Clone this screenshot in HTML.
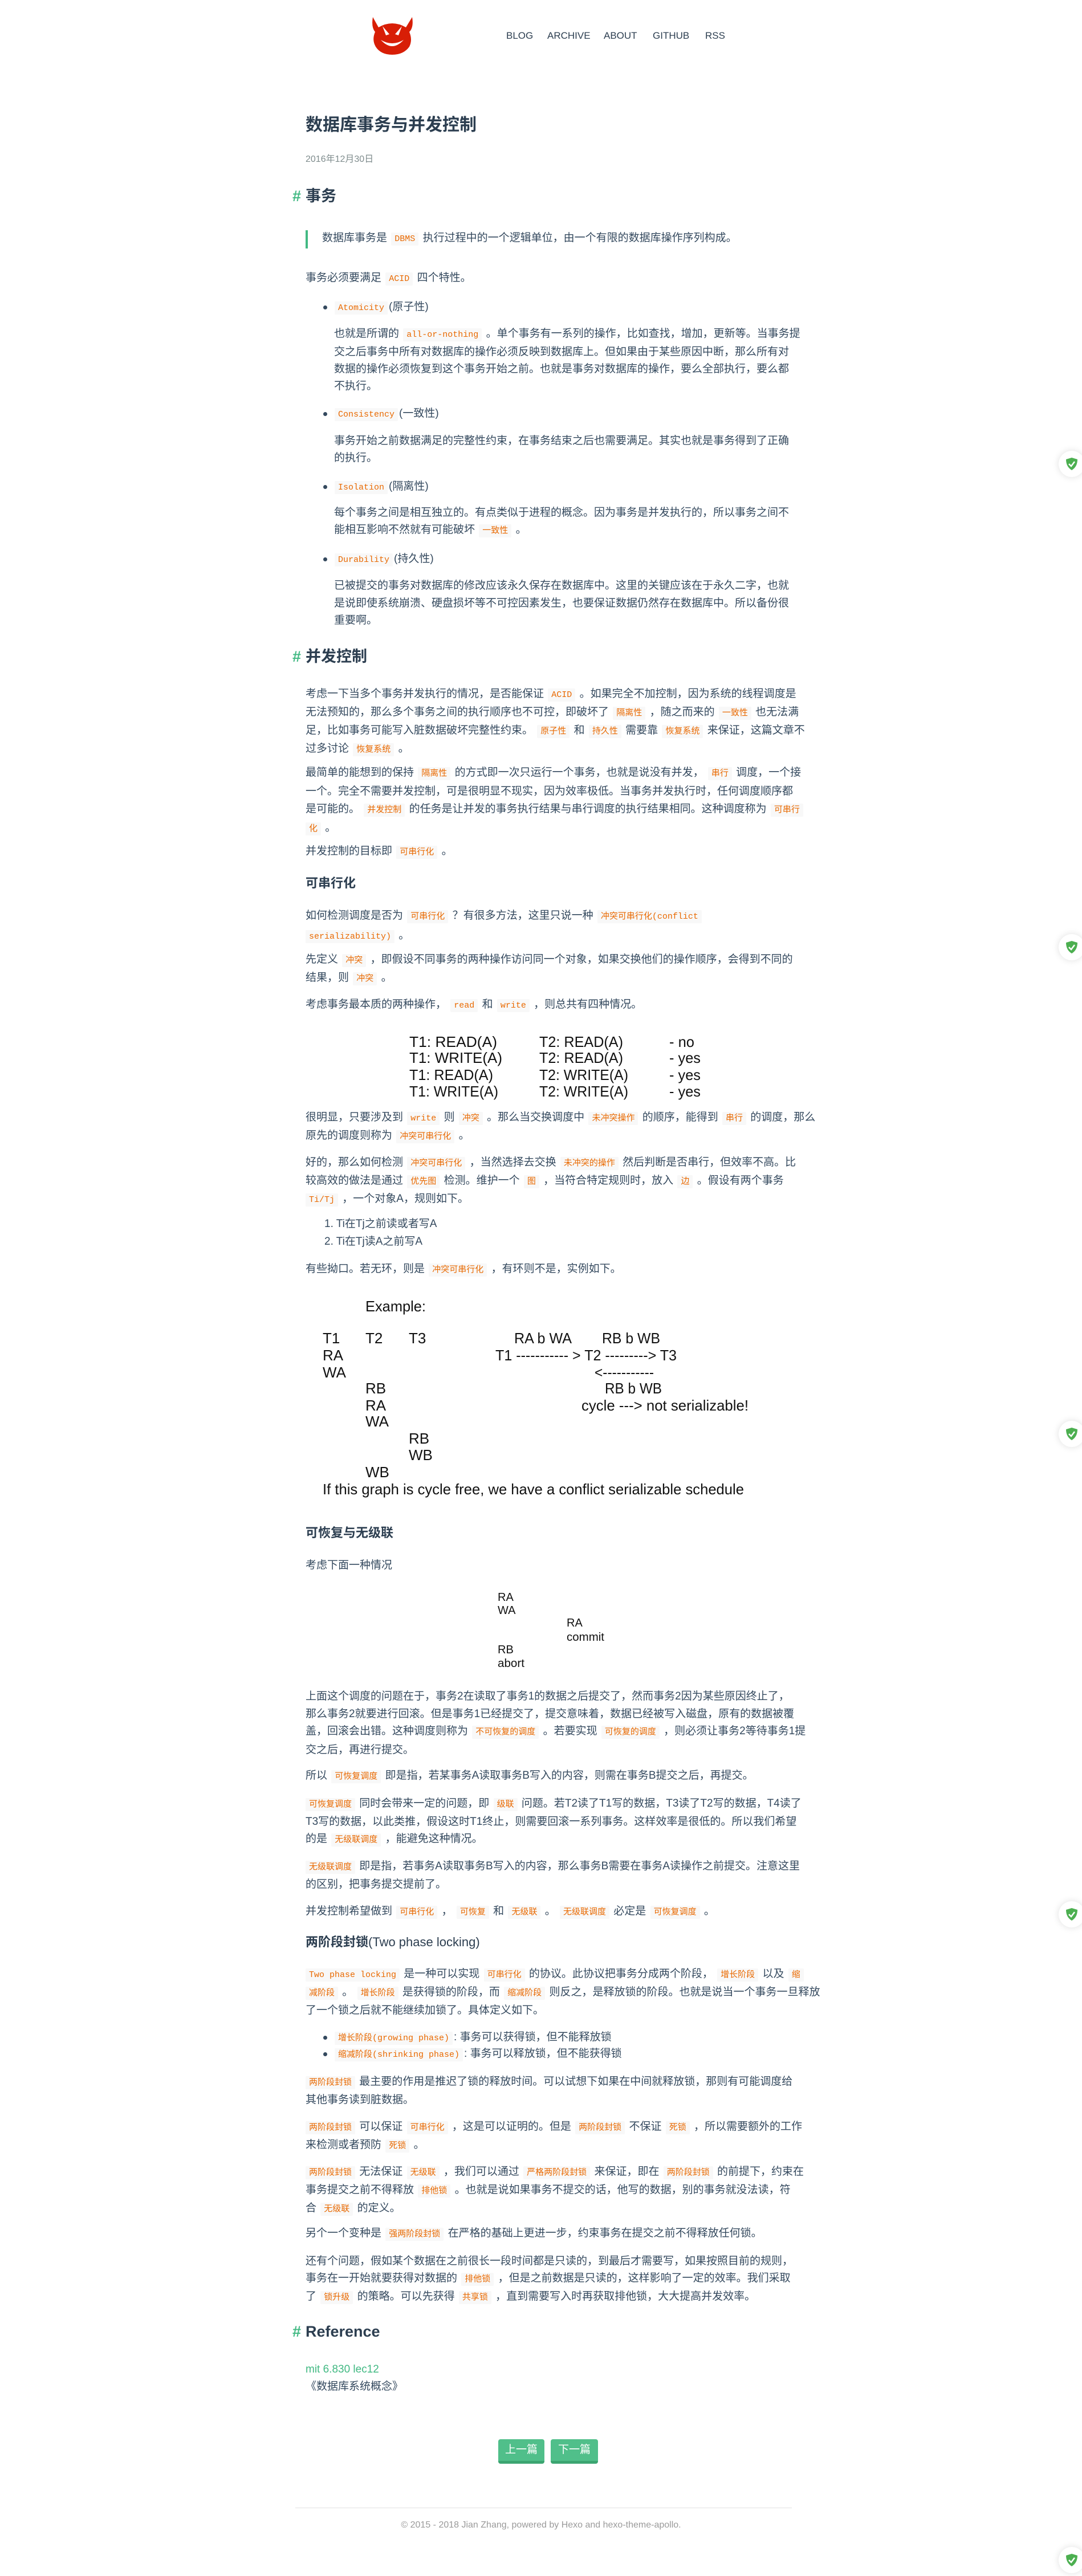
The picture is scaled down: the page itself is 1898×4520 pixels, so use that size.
<!DOCTYPE html>
<html><head><meta charset="utf-8">
<style>
*{margin:0;padding:0;box-sizing:border-box}
html,body{width:1898px;height:4520px;background:#fff;overflow:hidden}
body{position:relative;font-family:"Liberation Sans","Noto Sans CJK SC",sans-serif;color:#34495e}
.p{position:absolute;left:536px;font-size:19px;line-height:30px;white-space:nowrap;color:#34495e}
.in{left:586px}
code{font-family:"Liberation Mono","Noto Sans CJK SC",monospace;font-size:15px;color:#e96900;background:#f8f8f8;padding:3px 6px;border-radius:2px;margin:0 2px}
.h1{position:absolute;left:536px;font-size:27px;font-weight:bold;color:#2c3e50;line-height:40px;white-space:nowrap}
.h1 .hash{position:absolute;left:-23px;color:#42b983}
.h3{position:absolute;left:536px;font-size:22px;font-weight:bold;color:#2c3e50;line-height:32px;white-space:nowrap}
.dot{position:absolute;left:567px;width:7px;height:7px;border-radius:50%;background:#34495e}
.nav{position:absolute;top:53px;font-size:17px;color:#2c3e50;line-height:20px;letter-spacing:0}
.sh{position:absolute;left:1857px;width:46px;height:46px;border-radius:50%;background:#fff;box-shadow:0 0 12px rgba(0,0,0,.13)}
.sh svg{position:absolute;left:12px;top:11px}
.btn{position:absolute;top:4280px;height:43px;background:#50bf8a;border-bottom:5px solid #3ca571;border-radius:4px;color:#fff;font-size:19px;line-height:38px;text-align:center}
</style></head><body>

<svg style="position:absolute;left:652px;top:30px" width="72" height="66" viewBox="0 0 72 66">
<path d="M2 0 L12 18 Q36 4 60 18 L71 0 Q74 18 66 26 Q72 40 66 52 Q56 66 36 66 Q16 66 7 52 Q0 40 6 26 Q-1 18 2 0Z" fill="#d81e06"/>
<path d="M19 16 L31 30 L25 32Z M53 16 L41 30 L47 32Z" fill="#fff"/>
<path d="M16 40 Q36 62 56 40 Q36 52 16 40Z" fill="#fff"/>
</svg>
<div class="nav" style="left:888px">BLOG</div>
<div class="nav" style="left:960px">ARCHIVE</div>
<div class="nav" style="left:1059px">ABOUT</div>
<div class="nav" style="left:1145px">GITHUB</div>
<div class="nav" style="left:1237px">RSS</div>

<div style="position:absolute;left:536px;top:200px;font-size:30px;font-weight:bold;color:#2c3e50;line-height:40px">数据库事务与并发控制</div>
<div style="position:absolute;left:536px;top:270px;font-size:16px;color:#7f8c8d;line-height:20px">2016年12月30日</div>

<div class="h1" style="top:324px"><span class="hash">#</span>事务</div>
<div style="position:absolute;left:536px;top:404px;width:4px;height:32px;background:#42b983"></div>
<div class="p" style="left:565px;top:403px">数据库事务是 <code>DBMS</code> 执行过程中的一个逻辑单位，由一个有限的数据库操作序列构成。</div>
<div class="p" style="top:473px">事务必须要满足 <code>ACID</code> 四个特性。</div>

<div class="dot" style="top:536px"></div>
<div class="p" style="left:587px;top:524px"><code style="margin-left:0">Atomicity</code>(原子性)</div>
<div class="p in" style="top:571px">也就是所谓的 <code>all-or-nothing</code> 。单个事务有一系列的操作，比如查找，增加，更新等。当事务提<br>交之后事务中所有对数据库的操作必须反映到数据库上。但如果由于某些原因中断，那么所有对<br>数据的操作必须恢复到这个事务开始之前。也就是事务对数据库的操作，要么全部执行，要么都<br>不执行。</div>
<div class="dot" style="top:723px"></div>
<div class="p" style="left:587px;top:711px"><code style="margin-left:0">Consistency</code>(一致性)</div>
<div class="p in" style="top:759px">事务开始之前数据满足的完整性约束，在事务结束之后也需要满足。其实也就是事务得到了正确<br>的执行。</div>
<div class="dot" style="top:851px"></div>
<div class="p" style="left:587px;top:839px"><code style="margin-left:0">Isolation</code>(隔离性)</div>
<div class="p in" style="top:885px">每个事务之间是相互独立的。有点类似于进程的概念。因为事务是并发执行的，所以事务之间不<br>能相互影响不然就有可能破坏 <code>一致性</code> 。</div>
<div class="dot" style="top:978px"></div>
<div class="p" style="left:587px;top:966px"><code style="margin-left:0">Durability</code>(持久性)</div>
<div class="p in" style="top:1013px;line-height:30.5px">已被提交的事务对数据库的修改应该永久保存在数据库中。这里的关键应该在于永久二字，也就<br>是说即使系统崩溃、硬盘损坏等不可控因素发生，也要保证数据仍然存在数据库中。所以备份很<br>重要啊。</div>

<div class="h1" style="top:1132px"><span class="hash">#</span>并发控制</div>
<div class="p" style="top:1203px">考虑一下当多个事务并发执行的情况，是否能保证 <code>ACID</code> 。如果完全不加控制，因为系统的线程调度是<br>无法预知的，那么多个事务之间的执行顺序也不可控，即破坏了 <code>隔离性</code> ，随之而来的 <code>一致性</code> 也无法满<br>足，比如事务可能写入脏数据破坏完整性约束。 <code>原子性</code> 和 <code>持久性</code> 需要靠 <code>恢复系统</code> 来保证，这篇文章不<br>过多讨论 <code>恢复系统</code> 。</div>
<div class="p" style="top:1340px;line-height:31px">最简单的能想到的保持 <code>隔离性</code> 的方式即一次只运行一个事务，也就是说没有并发， <code>串行</code> 调度，一个接<br>一个。完全不需要并发控制，可是很明显不现实，因为效率极低。当事务并发执行时，任何调度顺序都<br>是可能的。 <code>并发控制</code> 的任务是让并发的事务执行结果与串行调度的执行结果相同。这种调度称为 <code>可串行</code><br><code style="margin-left:0">化</code> 。</div>
<div class="p" style="top:1479px">并发控制的目标即 <code>可串行化</code> 。</div>

<div class="h3" style="top:1534px">可串行化</div>
<div class="p" style="top:1590px;line-height:33px">如何检测调度是否为 <code>可串行化</code> ？有很多方法，这里只说一种 <code>冲突可串行化(conflict</code><br><code style="margin-left:0">serializability)</code> 。</div>
<div class="p" style="top:1669px">先定义 <code>冲突</code> ，即假设不同事务的两种操作访问同一个对象，如果交换他们的操作顺序，会得到不同的<br>结果，则 <code>冲突</code> 。</div>
<div class="p" style="top:1748px">考虑事务最本质的两种操作， <code>read</code> 和 <code>write</code> ，则总共有四种情况。</div>
<div class="p" style="top:1946px">很明显，只要涉及到 <code>write</code> 则 <code>冲突</code> 。那么当交换调度中 <code>未冲突操作</code> 的顺序，能得到 <code>串行</code> 的调度，那么<br>原先的调度则称为 <code>冲突可串行化</code> 。</div>
<div class="p" style="top:2025px">好的，那么如何检测 <code>冲突可串行化</code> ，当然选择去交换 <code>未冲突的操作</code> 然后判断是否串行，但效率不高。比<br>较高效的做法是通过 <code>优先图</code> 检测。维护一个 <code>图</code> ，当符合特定规则时，放入 <code>边</code> 。假设有两个事务<br><code style="margin-left:0">Ti/Tj</code> ，一个对象A，规则如下。</div>
<div class="p" style="left:569px;top:2132px;line-height:31px">1. Ti在Tj之前读或者写A<br>2. Ti在Tj读A之前写A</div>
<div class="p" style="top:2212px">有些拗口。若无环，则是 <code>冲突可串行化</code> ，有环则不是，实例如下。</div>

<div class="h3" style="top:2674px">可恢复与无级联</div>
<div class="p" style="top:2732px">考虑下面一种情况</div>
<div class="p" style="top:2962px;line-height:30.5px">上面这个调度的问题在于，事务2在读取了事务1的数据之后提交了，然而事务2因为某些原因终止了，<br>那么事务2就要进行回滚。但是事务1已经提交了，提交意味着，数据已经被写入磁盘，原有的数据被覆<br>盖，回滚会出错。这种调度则称为 <code>不可恢复的调度</code> 。若要实现 <code>可恢复的调度</code> ，则必须让事务2等待事务1提<br>交之后，再进行提交。</div>
<div class="p" style="top:3101px">所以 <code>可恢复调度</code> 即是指，若某事务A读取事务B写入的内容，则需在事务B提交之后，再提交。</div>
<div class="p" style="top:3150px"><code style="margin-left:0">可恢复调度</code> 同时会带来一定的问题，即 <code>级联</code> 问题。若T2读了T1写的数据，T3读了T2写的数据，T4读了<br>T3写的数据，以此类推，假设这时T1终止，则需要回滚一系列事务。这样效率是很低的。所以我们希望<br>的是 <code>无级联调度</code> ，能避免这种情况。</div>
<div class="p" style="top:3260px">可<span style="display:none"></span></div>
<div class="p" style="top:3260px;background:#fff"><code style="margin-left:0">无级联调度</code> 即是指，若事务A读取事务B写入的内容，那么事务B需要在事务A读操作之前提交。注意这里<br>的区别，把事务提交提前了。</div>
<div class="p" style="top:3339px">并发控制希望做到 <code>可串行化</code> ， <code>可恢复</code> 和 <code>无级联</code> 。 <code>无级联调度</code> 必定是 <code>可恢复调度</code> 。</div>

<div class="h3" style="top:3392px">两阶段封锁<span style="font-weight:normal">(Two phase locking)</span></div>
<div class="p" style="top:3449px"><code style="margin-left:0">Two phase locking</code> 是一种可以实现 <code>可串行化</code> 的协议。此协议把事务分成两个阶段， <code>增长阶段</code> 以及 <code>缩</code><br><code style="margin-left:0">减阶段</code> 。 <code>增长阶段</code> 是获得锁的阶段，而 <code>缩减阶段</code> 则反之，是释放锁的阶段。也就是说当一个事务一旦释放<br>了一个锁之后就不能继续加锁了。具体定义如下。</div>
<div class="dot" style="top:3572px"></div>
<div class="p" style="left:587px;top:3560px"><code style="margin-left:0">增长阶段(growing phase)</code>: 事务可以获得锁，但不能释放锁</div>
<div class="dot" style="top:3601px"></div>
<div class="p" style="left:587px;top:3589px"><code style="margin-left:0">缩减阶段(shrinking phase)</code>: 事务可以释放锁，但不能获得锁</div>
<div class="p" style="top:3638px"><code style="margin-left:0">两阶段封锁</code> 最主要的作用是推迟了锁的释放时间。可以试想下如果在中间就释放锁，那则有可能调度给<br>其他事务读到脏数据。</div>
<div class="p" style="top:3717px"><code style="margin-left:0">两阶段封锁</code> 可以保证 <code>可串行化</code> ，这是可以证明的。但是 <code>两阶段封锁</code> 不保证 <code>死锁</code> ，所以需要额外的工作<br>来检测或者预防 <code>死锁</code> 。</div>
<div class="p" style="top:3796px"><code style="margin-left:0">两阶段封锁</code> 无法保证 <code>无级联</code> ，我们可以通过 <code>严格两阶段封锁</code> 来保证，即在 <code>两阶段封锁</code> 的前提下，约束在<br>事务提交之前不得释放 <code>排他锁</code> 。也就是说如果事务不提交的话，他写的数据，别的事务就没法读，符<br>合 <code>无级联</code> 的定义。</div>
<div class="p" style="top:3904px">另个一个变种是 <code>强两阶段封锁</code> 在严格的基础上更进一步，约束事务在提交之前不得释放任何锁。</div>
<div class="p" style="top:3953px">还有个问题，假如某个数据在之前很长一段时间都是只读的，到最后才需要写，如果按照目前的规则，<br>事务在一开始就要获得对数据的 <code>排他锁</code> ，但是之前数据是只读的，这样影响了一定的效率。我们采取<br>了 <code>锁升级</code> 的策略。可以先获得 <code>共享锁</code> ，直到需要写入时再获取排他锁，大大提高并发效率。</div>

<div class="h1" style="top:4071px"><span class="hash">#</span>Reference</div>
<div class="p" style="top:4143px;color:#42b983">mit 6.830 lec12</div>
<div class="p" style="top:4173px">《数据库系统概念》</div>

<div class="btn" style="left:874px;width:81px">上一篇</div>
<div class="btn" style="left:966px;width:83px">下一篇</div>
<div style="position:absolute;left:518px;top:4400px;width:871px;height:1px;background:#e2e2e2"></div>
<div style="position:absolute;left:0;width:1898px;top:4420px;text-align:center;font-size:16px;color:#9a9a9a;line-height:22px">© 2015 - 2018 Jian Zhang, powered by Hexo and hexo-theme-apollo.</div>

<svg style="position:absolute;left:0;top:0" width="1898" height="4520" font-family="Liberation Sans, sans-serif" fill="#111">
<g font-size="26">
<text x="718" y="1837" textLength="154" lengthAdjust="spacingAndGlyphs">T1:  READ(A)</text>
<text x="718" y="1865" textLength="163" lengthAdjust="spacingAndGlyphs">T1:  WRITE(A)</text>
<text x="718" y="1895" textLength="147" lengthAdjust="spacingAndGlyphs">T1: READ(A)</text>
<text x="718" y="1924" textLength="156" lengthAdjust="spacingAndGlyphs">T1: WRITE(A)</text>
<text x="946" y="1837" textLength="147" lengthAdjust="spacingAndGlyphs">T2: READ(A)</text>
<text x="946" y="1865" textLength="147" lengthAdjust="spacingAndGlyphs">T2: READ(A)</text>
<text x="946" y="1895" textLength="156" lengthAdjust="spacingAndGlyphs">T2: WRITE(A)</text>
<text x="946" y="1924" textLength="156" lengthAdjust="spacingAndGlyphs">T2: WRITE(A)</text>
<text x="1174" y="1837" textLength="44" lengthAdjust="spacingAndGlyphs">- no</text>
<text x="1174" y="1865" textLength="55" lengthAdjust="spacingAndGlyphs">- yes</text>
<text x="1174" y="1895" textLength="55" lengthAdjust="spacingAndGlyphs">- yes</text>
<text x="1174" y="1924" textLength="55" lengthAdjust="spacingAndGlyphs">- yes</text>

<text x="641" y="2301" textLength="106" lengthAdjust="spacingAndGlyphs">Example:</text>
<text x="566" y="2357">T1</text><text x="641" y="2357">T2</text><text x="717" y="2357">T3</text>
<text x="566" y="2387">RA</text><text x="566" y="2417">WA</text>
<text x="641" y="2445">RB</text><text x="641" y="2475">RA</text><text x="641" y="2503">WA</text>
<text x="717" y="2533">RB</text><text x="717" y="2562">WB</text><text x="641" y="2592">WB</text>
<text x="902" y="2357" textLength="101" lengthAdjust="spacingAndGlyphs">RA b WA</text>
<text x="1056" y="2357" textLength="102" lengthAdjust="spacingAndGlyphs">RB b WB</text>
<text x="869" y="2387" textLength="318" lengthAdjust="spacingAndGlyphs">T1 ----------- &gt; T2 ---------&gt; T3</text>
<text x="1043" y="2417" textLength="104" lengthAdjust="spacingAndGlyphs">&lt;-----------</text>
<text x="1061" y="2445" textLength="100" lengthAdjust="spacingAndGlyphs">RB b WB</text>
<text x="1020" y="2475" textLength="293" lengthAdjust="spacingAndGlyphs">cycle ---&gt; not serializable!</text>
<text x="566" y="2622" textLength="739" lengthAdjust="spacingAndGlyphs">If this graph is cycle free, we have a conflict serializable schedule</text>
</g>
<g font-size="20">
<text x="873" y="2809">RA</text><text x="873" y="2832">WA</text>
<text x="994" y="2854">RA</text><text x="994" y="2879" textLength="66" lengthAdjust="spacingAndGlyphs">commit</text>
<text x="873" y="2901">RB</text><text x="873" y="2925" textLength="47" lengthAdjust="spacingAndGlyphs">abort</text>
</g>
</svg>

<div class="sh" style="top:791px"><svg width="22" height="24" viewBox="0 0 22 24"><path d="M11 1 L21 4 Q21 17 11 23 Q1 17 1 4Z" fill="#4caf50"/><path d="M6 12 L10 16 L16 8" stroke="#fff" stroke-width="2.5" fill="none"/></svg></div>
<div class="sh" style="top:1639px"><svg width="22" height="24" viewBox="0 0 22 24"><path d="M11 1 L21 4 Q21 17 11 23 Q1 17 1 4Z" fill="#4caf50"/><path d="M6 12 L10 16 L16 8" stroke="#fff" stroke-width="2.5" fill="none"/></svg></div>
<div class="sh" style="top:2493px"><svg width="22" height="24" viewBox="0 0 22 24"><path d="M11 1 L21 4 Q21 17 11 23 Q1 17 1 4Z" fill="#4caf50"/><path d="M6 12 L10 16 L16 8" stroke="#fff" stroke-width="2.5" fill="none"/></svg></div>
<div class="sh" style="top:3336px"><svg width="22" height="24" viewBox="0 0 22 24"><path d="M11 1 L21 4 Q21 17 11 23 Q1 17 1 4Z" fill="#4caf50"/><path d="M6 12 L10 16 L16 8" stroke="#fff" stroke-width="2.5" fill="none"/></svg></div>
<div class="sh" style="top:4469px"><svg width="22" height="24" viewBox="0 0 22 24"><path d="M11 1 L21 4 Q21 17 11 23 Q1 17 1 4Z" fill="#4caf50"/><path d="M6 12 L10 16 L16 8" stroke="#fff" stroke-width="2.5" fill="none"/></svg></div>
</body></html>
